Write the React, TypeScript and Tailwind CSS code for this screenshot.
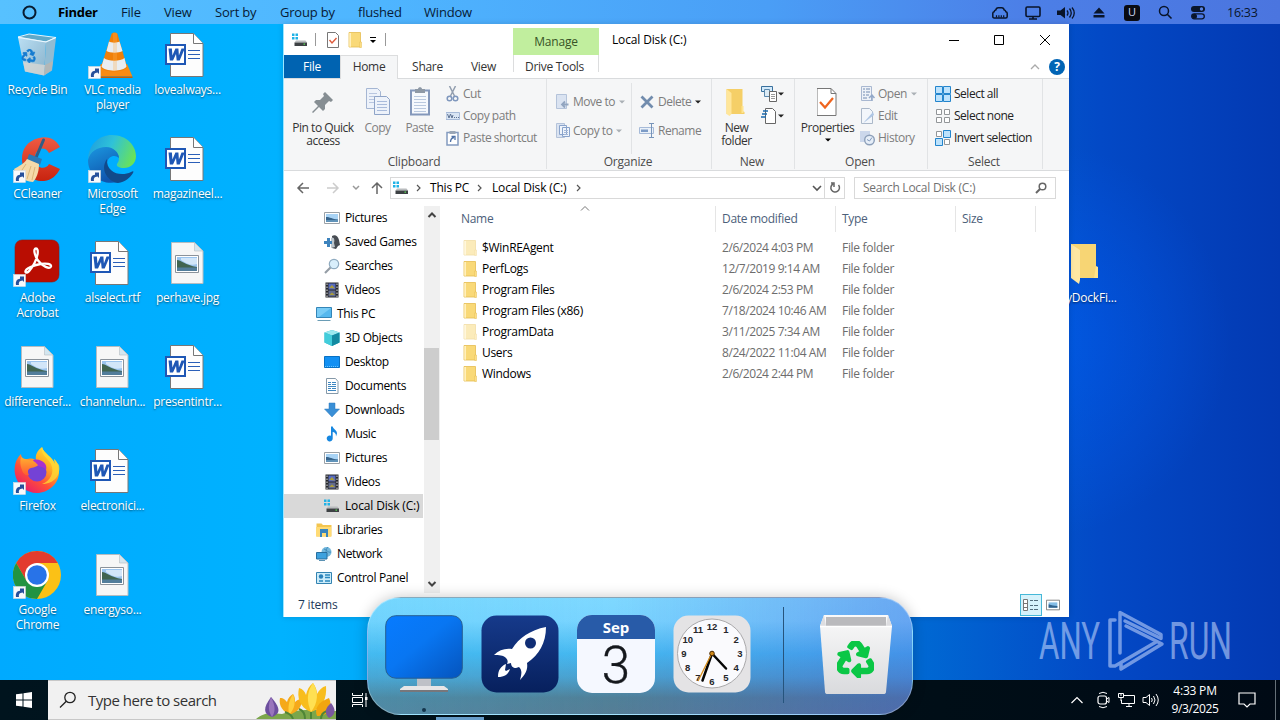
import React from "react";
import clsx from "clsx";
import { FaRecycle } from "react-icons/fa";

type SvgProps = {
	w: number;
	h: number;
	box?: string;
	className?: string;
	children: React.ReactNode;
};

const Svg: React.FC<SvgProps> = ({ w, h, box, className, children }) => (
	<svg
		width={w}
		height={h}
		viewBox={box ?? `0 0 ${w} ${h}`}
		fill="none"
		className={clsx("block shrink-0", className)}
	>
		{children}
	</svg>
);

/* ---------- desktop icons ---------- */

const ShortcutArrow = () => (
	<g>
		<rect x="0.5" y="35.5" width="12" height="12" fill="#f8f9fb" stroke="#d5dbe2" strokeWidth="0.6" />
		<path d="M3 46c-.6-4 1-6 4-6.300V37.500h4v5.500L9.600 41.500C6.500 42 5.500 43 6 46z" fill="#27509b" />
	</g>
);

const RecycleBinIcon = () => (
	<Svg w={48} h={48}>
		<defs>
			<linearGradient id="bin" x1="0" y1="0" x2="1" y2="1">
				<stop stopColor="#c5e2f3" />
				<stop offset="1" stopColor="#8fb2c8" />
			</linearGradient>
		</defs>
		<path d="M5 6 16 3l27 3.500-10 4.500z" fill="#5fa9c9" stroke="#e3f3fb" />
		<path d="M5 6.500 33 11l-2 33.500-19-4z" fill="url(#bin)" opacity=".95" />
		<path d="m33 11 10-4-4 32.500-8 5z" fill="#92bcd3" />
		<path d="m10 31 22 3-1 10.500-19-4z" fill="#dcd8d3" opacity=".75" />
		<path d="m32 34 8-4-1.500 9.500-7.500 5z" fill="#bab5b0" opacity=".8" />
		<g transform="translate(10 17) rotate(8)">
			<FaRecycle size={14} color="#147bd1" stroke="#147bd1" strokeWidth={25} />
		</g>
		<path d="M5 6.500 33 11l10-4.500" stroke="#edf8ff" strokeWidth="1.200" />
	</Svg>
);

const VlcIcon = () => (
	<Svg w={48} h={48}>
		<path d="M13 33h26l5.500 12.500H7z" fill="#f98b12" />
		<path d="M7 45.500h37.500V47H7z" fill="#c85e00" />
		<path d="M13 36c2 6 24 6 26 0l-9.500-33c-.8-2-5.200-2-6 0z" fill="#f08009" />
		<path d="m21 10.500-2.500 9.500c3.500 2.200 12.500 2.200 16 0L31.500 10.500c-2 1.500-8.500 1.500-10.500 0zM16 27l-2.500 8.500c3 5.500 22 5.500 25 0L36.500 27c-4 3.500-16.500 3.500-20.500 0z" fill="#e9edf1" />
		<path d="M27 2v38" stroke="#ffb050" strokeWidth="4" opacity=".3" />
		<ShortcutArrow />
	</Svg>
);

const WordIcon = () => (
	<Svg w={48} h={48} box="1 -1 48 48">
		<path d="M8.500 1.500h23l9.500 10v33H8.500z" fill="#fdfdfd" stroke="#777" />
		<path d="M31.500 1.500v10H41" fill="#fff" stroke="#777" />
		<path d="M26 18.500h12M26 22.500h12M26 26.500h12" stroke="#2b5fb8" />
		<path d="M4 13h19v19H4z" fill="#fff" stroke="#1f57b5" strokeWidth="2" />
		<path d="m6.500 16.500 1.300 12h3.200l3-6.500.7 6.500h3l5-12h-3.200l-2.600 7-.5-7h-3l-3 7-.5-7z" fill="#1f57b5" />
	</Svg>
);

const ImageFileIcon = () => (
	<Svg w={48} h={48} box="1 -1 48 48">
		<path d="M9.500 2.500h23l8.500 8.500v32.500H9.500z" fill="#f6f6f6" stroke="#b5bcc1" />
		<path d="M32.500 2.500V11H41z" fill="#d4e6ef" stroke="#b5bcc1" strokeWidth=".6" />
		<path d="M13.500 15.500h23v17h-23z" fill="#fff" stroke="#8b929a" />
		<path d="M15 17h20v14H15z" fill="#9bc4ee" />
		<path d="M19 18h16v6c-6 2-10 0-16-4z" fill="#d2e6f9" />
		<path d="M15 20c4 0 8 5 20 7v1H15z" fill="#416450" />
		<path d="M15 27.500h20V31H15z" fill="#527d9b" />
	</Svg>
);

const CCleanerIcon = () => (
	<Svg w={48} h={48}>
		<defs>
			<linearGradient id="cc" x1="0" y1="0" x2="0" y2="1">
				<stop stopColor="#ef5b43" />
				<stop offset="1" stopColor="#c8230f" />
			</linearGradient>
		</defs>
		<path d="M47 12C42 3 34 1 26 3 14 6 9 14 9 24c0 14 11 23 22 22 8-1 12-5 16-12l-11-5c-3 6-13 5-14-4-1-12 10-15 14-7z" fill="url(#cc)" />
		<path d="M30.500 5 22 25" stroke="#315d86" strokeWidth="3" strokeLinecap="round" />
		<path d="m16 19 13 5-2 6-13-5z" fill="#2d79b5" />
		<path d="M14 24c-3 5-8 7-13 10 2 6 9 12 19 13 3-3 6-9 6-18z" fill="#f5d9a9" />
		<path d="m13 29-6 9m11-7-4 13m8-12-3 13" stroke="#d6ab69" strokeWidth=".8" />
		<ShortcutArrow />
	</Svg>
);

const EdgeIcon = () => (
	<Svg w={48} h={48}>
		<defs>
			<linearGradient id="edgeTop" x1="0" y1="0.300" x2="1" y2="0.600">
				<stop stopColor="#1fa0de" />
				<stop offset=".45" stopColor="#2fc2d8" />
				<stop offset="1" stopColor="#6be355" />
			</linearGradient>
			<linearGradient id="edgeLeft" x1="0" y1="0" x2="0.400" y2="1">
				<stop stopColor="#1b97e0" />
				<stop offset="1" stopColor="#0f56ae" />
			</linearGradient>
		</defs>
		<path d="M0 24C1 9 11 0 24 0c15 0 24 11 24 21 0 8-6 12-12 12-5 0-8-2-7-4 5-6 0-15-9-16C10 13 3 18 0 24z" fill="url(#edgeTop)" />
		<path d="M0 25c2-8 9-13 18-13 8 0 13 6 13 11-4-4-11-2-12 5-1 9 6 14 11 19C13 51 0 40 0 25z" fill="url(#edgeLeft)" />
		<path d="M19 24c-8 11 2 23 11 24 7-1 12-5 15-10 1-2 0-2-2-1-10 5-25 1-24-13z" fill="#114a8b" />
		<ShortcutArrow />
	</Svg>
);

const AcrobatIcon = () => (
	<Svg w={48} h={48}>
		<rect x="2" y="1" width="44" height="42" rx="7" fill="#b90d02" stroke="#8e1a14" strokeWidth=".6" />
		<path
			d="M23 9.500c3 0 2 8-1.500 14.500C18 31 13.500 35.500 12.500 33c-1-3 8-7 15-8 6-1 11 0 10.500 2.500C37 31 29 27 25 21.500 21.500 16.500 20 9.500 23 9.500z"
			stroke="#fff"
			strokeWidth="2.300"
		/>
		<ShortcutArrow />
	</Svg>
);

const FirefoxIcon = () => (
	<Svg w={48} h={48}>
		<defs>
			<linearGradient id="fox" x1="0.900" y1="0" x2="0.200" y2="1">
				<stop stopColor="#fff040" />
				<stop offset=".35" stopColor="#ffae25" />
				<stop offset=".65" stopColor="#ff5037" />
				<stop offset="1" stopColor="#e51672" />
			</linearGradient>
			<linearGradient id="foxHead" x1="0" y1="0" x2="0" y2="1">
				<stop stopColor="#ffb030" />
				<stop offset="1" stopColor="#ff5b30" />
			</linearGradient>
		</defs>
		<path d="M29 0c-5 4-7 8-6 13-6-3-9-1-11 0C9 11 8 9 8 7 2 13 1 20 2 27c2 11 11 19 22 19s22-9 22-21c0-6-2-11-5-13l1 5C39 9 31 7 29 0z" fill="url(#fox)" />
		<circle cx="24" cy="25" r="9.500" fill="#7442d6" />
		<path d="M20 13c8-2 15 4 13 10-2-3-6-4-10-4z" fill="#a931cf" />
		<path d="M8 10c4 3 8 2 14 5l3 3c-2 3-7 2-9 4s-1 4 0 6c-3 1-6-1-7-5-2-4-2-9-1-13z" fill="url(#foxHead)" />
		<path d="M29 0c-2 8 6 11 9 17 4 9-1 17-9 20 13 0 19-10 17-19l-5-6 1 5C39 9 31 7 29 0z" fill="#ffdc35" opacity=".75" />
		<ShortcutArrow />
	</Svg>
);

const ChromeIcon = () => (
	<Svg w={48} h={48}>
		<circle cx="24" cy="24" r="24" fill="#fbc116" />
		<path d="M24 0a24 24 0 0 1 20.800 12H24L13.600 30 3.200 12A24 24 0 0 1 24 0z" fill="#e33b2e" />
		<path d="M3.200 12A24 24 0 0 0 24 48l10.400-18L24 36 13.600 30z" fill="#229342" />
		<circle cx="24" cy="24" r="12" fill="#fff" />
		<circle cx="24" cy="24" r="9.800" fill="#2873e8" />
		<ShortcutArrow />
	</Svg>
);

const desktopColumns = [
	[
		{ label: "Recycle Bin", icon: <RecycleBinIcon /> },
		{ label: "CCleaner", icon: <CCleanerIcon /> },
		{ label: "Adobe Acrobat", icon: <AcrobatIcon /> },
		{ label: "differencef...", icon: <ImageFileIcon /> },
		{ label: "Firefox", icon: <FirefoxIcon /> },
		{ label: "Google Chrome", icon: <ChromeIcon /> },
	],
	[
		{ label: "VLC media player", icon: <VlcIcon /> },
		{ label: "Microsoft Edge", icon: <EdgeIcon /> },
		{ label: "alselect.rtf", icon: <WordIcon /> },
		{ label: "channelun...", icon: <ImageFileIcon /> },
		{ label: "electronici...", icon: <WordIcon /> },
		{ label: "energyso...", icon: <ImageFileIcon /> },
	],
	[
		{ label: "lovealways...", icon: <WordIcon /> },
		{ label: "magazineel...", icon: <WordIcon /> },
		{ label: "perhave.jpg", icon: <ImageFileIcon /> },
		{ label: "presentintr...", icon: <WordIcon /> },
	],
];

const Desktop: React.FC = () => (
	<div className="flex h-[656px] pt-[7px]">
		{desktopColumns.map((column, i) => (
			<div key={i} className="flex w-[75px] flex-col">
				{column.map((item) => (
					<div key={item.label} className="flex h-[104px] flex-col items-center">
						<div className="mr-px">{item.icon}</div>
						<div className="mt-[3px] px-1.5 text-center leading-[15px] tracking-[-0.25px] text-white [text-shadow:0_1px_2px_rgba(0,0,0,0.55)]">
							{item.label}
						</div>
					</div>
				))}
			</div>
		))}
	</div>
);

/* ---------- top menu bar ---------- */

const menuItems = [
	{ label: "File", width: "w-[43px]" },
	{ label: "View", width: "w-[51px]" },
	{ label: "Sort by", width: "w-[65px]" },
	{ label: "Group by", width: "w-[78px]" },
	{ label: "flushed", width: "w-[66px]" },
	{ label: "Window", width: "w-[60px]" },
];

const MenuBar: React.FC = () => (
	<div className="flex h-6 items-center bg-[linear-gradient(90deg,#57c1ff_0%,#4eb5ff_30%,#4a9ef6_60%,#4c7fe7_80%,#4b75df_100%)] pt-px text-[13px] text-[#071b36]">
		<Svg w={16} h={16} className="ml-[21px] mr-[21px]">
			<circle cx="8.500" cy="7.500" r="6" stroke="#081b30" strokeWidth="2" />
		</Svg>
		<div className="w-[63px] font-bold tracking-[-0.3px] text-black">Finder</div>
		{menuItems.map((item) => (
			<div key={item.label} className={clsx(item.width, "whitespace-nowrap")}>
				{item.label}
			</div>
		))}
		<div className="ml-auto flex items-center text-[#09152b]">
			<Svg w={18} h={16} className="mr-[15px]">
				<path d="M3.200 13c-.9 0-1.400-.6-1.400-1.500V8.300c0-.9.500-1.400 1.400-1.600.2-1 .7-1.500 1.600-1.700.3-1.600 1-2.300 2.400-2.300h3.600c1.400 0 2.100.7 2.400 2.300.9.200 1.400.7 1.600 1.700.9.200 1.400.7 1.400 1.600v3.200c0 .9-.5 1.500-1.400 1.500z" stroke="currentColor" strokeWidth="1.500" />
				<path d="M5.500 12.500v-2.300m2.400 2.300v-2.300m2.400 2.300v-2.300m2.400 2.300v-2.300" stroke="currentColor" strokeWidth="1.200" />
			</Svg>
			<Svg w={18} h={16} className="mr-[14px]">
				<rect x="2" y="2" width="14" height="9.500" rx="1.200" stroke="currentColor" strokeWidth="1.600" />
				<path d="M9 11v3m-4 0h8" stroke="currentColor" strokeWidth="1.600" />
			</Svg>
			<Svg w={20} h={16} className="mr-[16px]">
				<path d="M1 5.500h3.500L9 2v11.500L4.500 10H1z" fill="currentColor" />
				<path d="M11 5.500q2 2.500 0 5m2.500-7q3.500 4.500 0 9m2.500-10q4.500 5.500 0 11" stroke="currentColor" strokeWidth="1.300" />
			</Svg>
			<Svg w={14} h={14} className="mr-[18px]">
				<path d="m7 1.500 5.500 6h-11zM1.500 9h11v2.500h-11z" fill="currentColor" />
			</Svg>
			<div className="mr-[17px] flex size-4 items-center justify-center rounded-[3px] bg-[#090b12] text-[11px] text-[#d2dcf5]">U</div>
			<Svg w={16} h={16} className="mr-[17px]">
				<circle cx="7" cy="6" r="4.500" stroke="currentColor" strokeWidth="1.500" />
				<path d="m10 9 4.500 4.500" stroke="currentColor" strokeWidth="1.600" />
			</Svg>
			<Svg w={16} h={16} className="mr-[21px]">
				<rect x="1" y="1" width="14" height="6" rx="3" fill="currentColor" />
				<circle cx="11.500" cy="4" r="1.700" fill="#5a83e3" />
				<rect x="1.700" y="8.800" width="12.600" height="5" rx="2.500" stroke="currentColor" strokeWidth="1.300" />
				<circle cx="4.500" cy="11.300" r="2.500" fill="currentColor" />
			</Svg>
			<div className="w-[53px] pt-px text-[12.5px] tracking-[-0.25px]">16:33</div>
		</div>
	</div>
);

/* ---------- explorer: small icons ---------- */

const DriveIcon = () => (
	<Svg w={16} h={16}>
		<path d="M0 1.500h2.500V4H0zm3.500 0H6V4H3.500zM0 5h2.500v2.500H0zm3.500 0H6v2.500H3.500z" fill="#20b2e6" />
		<path d="M4 8.500h9.500l1.500 2H2.500z" fill="#b9bcbe" />
		<path d="M2.500 10.500H15V14H2.500z" fill="#3d4144" />
		<path d="M11.500 12.200H13" stroke="#58db55" strokeWidth="1.200" />
	</Svg>
);

const Caret: React.FC<{ className?: string }> = ({ className }) => (
	<Svg w={6} h={4} className={className}>
		<path d="M0 .5h6l-3 3z" fill="currentColor" />
	</Svg>
);

const FolderIcon: React.FC<{ faded?: boolean }> = ({ faded }) => (
	<Svg w={16} h={16} className={faded ? "opacity-50" : ""}>
		<path d="M2 .5h11.500V15H2z" fill="#f9d978" stroke="#e5bd50" strokeWidth=".8" />
		<path d="M2.300 1h1.700v13.800H2.300z" fill="#fff0bd" />
		<path d="M12.700 10H14.500v5.500h-1.800z" fill="#ffe28a" stroke="#e5bd50" strokeWidth=".5" />
	</Svg>
);

const PictureIcon = () => (
	<Svg w={16} h={16}>
		<path d="M.5 2.500h15v11H.5z" fill="#fff" stroke="#9aa1a7" />
		<path d="M2 4h12v8H2z" fill="#a8d3f5" />
		<path d="M2 7c4 0 6 2 12 2.500V12H2z" fill="#36648c" />
		<path d="M2 10h12v2H2z" fill="#6093b9" />
	</Svg>
);

const VideoIcon = () => (
	<Svg w={16} h={16}>
		<path d="M1.500.5h13v15h-13z" fill="#27282c" />
		<path d="M4.500 1.500h7v6h-7z" fill="#576bc0" />
		<path d="M4.500 8.500h7v6h-7z" fill="#626c90" />
		<path d="m5 6 3-3 3 3.500zM5 13l3-2.500 3 2.500z" fill="#a99c3c" />
		<path d="M3 1.500v14m10-14v14" stroke="#e2e3e6" strokeDasharray="1.500 1.500" />
	</Svg>
);

const GamesIcon = () => (
	<Svg w={16} h={16}>
		<path d="M8 2c3-2 6 0 7 4l1 5-2 1-2 3-4-1z" fill="#474c52" />
		<path d="M7 4c3-2 4 2 3 5l1 4-4 1z" fill="#bec6cc" />
		<path d="M0 7h3V4h3v3h2v3H6v3H3v-3H0z" fill="#3d83bd" />
	</Svg>
);

const SearchFolderIcon = () => (
	<Svg w={16} h={16}>
		<path d="m1 15 6-6" stroke="#949da5" strokeWidth="2.200" />
		<circle cx="10" cy="6" r="4.700" fill="#d8eefb" stroke="#8fabc0" strokeWidth="1.200" />
	</Svg>
);

const PcIcon = () => (
	<Svg w={16} h={16}>
		<path d="M.5 1.500h15v10H.5z" fill="#56b8ee" stroke="#3485b7" />
		<path d="M1 2h14L3 11H1z" fill="#91d8fb" opacity=".6" />
		<path d="M1.500 14.500h13" stroke="#6a9cb5" />
	</Svg>
);

const CubeIcon = () => (
	<Svg w={16} h={16}>
		<path d="m8 0 7.500 2.500v10L8 16 .5 12.500v-10z" fill="#27b2c5" />
		<path d="M.5 2.500 8 0l7.500 2.500L8 5.500z" fill="#9be9ef" />
		<path d="M8 5.500 15.500 2.500v10L8 16z" fill="#128aa1" />
		<path d="M.5 2.500 8 5.500V16L.5 12.500z" fill="#42cddb" />
	</Svg>
);

const DesktopIcon = () => (
	<Svg w={16} h={16}>
		<path d="M.5 2.500h15v11H.5z" fill="#1290f3" stroke="#0871c4" />
		<path d="M1 12.500h14" stroke="#67c5ff" strokeDasharray="1 1" />
	</Svg>
);

const DocumentIcon = () => (
	<Svg w={16} h={16}>
		<path d="M2.500.5h9l2.500 3v12H2.500z" fill="#fff" stroke="#8599a9" />
		<path d="M4 4.500h3m1 0h4M4 6.500h3m1 0h4M4 8.500h8M4 10.500h3m1 0h4M4 12.500h8" stroke="#3e87c1" />
	</Svg>
);

const DownloadIcon = () => (
	<Svg w={16} h={16}>
		<path d="M5 1h6v6h4.500L8 15 .5 7H5z" fill="#3a8fd6" stroke="#2d7bbd" strokeWidth=".5" />
	</Svg>
);

const MusicIcon = () => (
	<Svg w={16} h={16}>
		<path d="M7 .5h1.700c.5 3 4.300 3.500 4.300 7l-1 3c.3-3-1.500-4.500-3.300-4.500v6.500a3 3 0 1 1-1.700-2.700z" fill="#1687e0" />
	</Svg>
);

const LibraryIcon = () => (
	<Svg w={16} h={16}>
		<path d="M.5 1.500h5L7 3h8.500v11.500H.5z" fill="#f3c550" />
		<path d="M0 5h15v9.500H0z" fill="#ffdb75" />
		<path d="M4 7h8v8h-2v-4H6v4H4z" fill="#3985bd" />
	</Svg>
);

const NetworkIcon = () => (
	<Svg w={16} h={16}>
		<circle cx="10.500" cy="6" r="5" fill="#74b8dd" />
		<path d="M8 3c3 1 4 4 7 3M9 9c2-3 0-5 3-8" stroke="#3784b5" strokeWidth=".8" />
		<path d="M.5 6.500H11V13H.5z" fill="#3da1de" stroke="#286f9f" />
		<path d="M3 14.500h6" stroke="#5b92b4" />
	</Svg>
);

const ControlPanelIcon = () => (
	<Svg w={16} h={16}>
		<path d="M.5 2.500h15v11H.5z" fill="#ccecfa" stroke="#3383b1" />
		<circle cx="5" cy="6.500" r="2.200" fill="#2b81b9" />
		<path d="M9 5h5M9 7.500h5M3 11h4m2 0h5" stroke="#2a88be" strokeWidth="1.300" />
	</Svg>
);

const navItems = [
	{ label: "Pictures", icon: <PictureIcon />, nested: true },
	{ label: "Saved Games", icon: <GamesIcon />, nested: true },
	{ label: "Searches", icon: <SearchFolderIcon />, nested: true },
	{ label: "Videos", icon: <VideoIcon />, nested: true },
	{ label: "This PC", icon: <PcIcon />, nested: false },
	{ label: "3D Objects", icon: <CubeIcon />, nested: true },
	{ label: "Desktop", icon: <DesktopIcon />, nested: true },
	{ label: "Documents", icon: <DocumentIcon />, nested: true },
	{ label: "Downloads", icon: <DownloadIcon />, nested: true },
	{ label: "Music", icon: <MusicIcon />, nested: true },
	{ label: "Pictures", icon: <PictureIcon />, nested: true },
	{ label: "Videos", icon: <VideoIcon />, nested: true },
	{ label: "Local Disk (C:)", icon: <DriveIcon />, nested: true, selected: true },
	{ label: "Libraries", icon: <LibraryIcon />, nested: false },
	{ label: "Network", icon: <NetworkIcon />, nested: false },
	{ label: "Control Panel", icon: <ControlPanelIcon />, nested: false },
];

const files = [
	{ name: "$WinREAgent", date: "2/6/2024 4:03 PM", faded: true },
	{ name: "PerfLogs", date: "12/7/2019 9:14 AM" },
	{ name: "Program Files", date: "2/6/2024 2:53 PM" },
	{ name: "Program Files (x86)", date: "7/18/2024 10:46 AM" },
	{ name: "ProgramData", date: "3/11/2025 7:34 AM", faded: true },
	{ name: "Users", date: "8/24/2022 11:04 AM" },
	{ name: "Windows", date: "2/6/2024 2:44 PM" },
];

/* ---------- explorer: ribbon ---------- */

const RibbonGroup: React.FC<{ label: string; width: string; children: React.ReactNode }> = ({
	label,
	width,
	children,
}) => (
	<div className={clsx("flex h-[90px] flex-col border-r border-[#e1e3e5]", width)}>
		<div className="flex h-[75px] pt-1">{children}</div>
		<div className="pr-[2px] text-center leading-[15px] tracking-[-0.2px] text-[#4c4c4c]">{label}</div>
	</div>
);

const BigButton: React.FC<{
	icon: React.ReactNode;
	lines: string[];
	width: string;
	muted?: boolean;
	caret?: boolean;
}> = ({ icon, lines, width, muted, caret }) => (
	<div className={clsx("flex shrink-0 flex-col items-center", width, muted ? "text-[#808080]" : "text-[#333]")}>
		<div className="flex h-[38px] items-center">{icon}</div>
		{lines.map((line) => (
			<div key={line} className="whitespace-nowrap leading-[13px]">
				{line}
			</div>
		))}
		{caret && <Caret className="mt-1 text-black" />}
	</div>
);

const SmallButton: React.FC<{
	icon: React.ReactNode;
	label?: string;
	height?: string;
	muted?: boolean;
	caret?: "light" | "dark";
}> = ({ icon, label, height = "h-[22px]", muted, caret }) => (
	<div className={clsx("flex items-center whitespace-nowrap", height, muted ? "text-[#7d7d7d]" : "text-[#222]")}>
		{icon}
		{label && <span className="ml-[3px]">{label}</span>}
		{caret && (
			<Caret className={clsx(label ? "ml-1" : "ml-0", caret === "dark" ? "text-[#222]" : "text-[#aab0b5]")} />
		)}
	</div>
);

const Ribbon: React.FC = () => (
	<div className="flex h-[93px] border-y border-[#d9dbdd] bg-[#f5f6f7] tracking-[-0.48px]">
		<RibbonGroup label="Clipboard" width="w-[263px]">
			<BigButton
				width="w-[78px]"
				lines={["Pin to Quick", "access"]}
				icon={
					<Svg w={24} h={24}>
						<path d="m14 2 8 8-2 2-2-1-4 4v4l-2 2-4-4-6 6-1-1 6-6-4-4 2-2h4l4-4-1-2z" fill="#868e93" />
					</Svg>
				}
			/>
			<BigButton
				width="w-[31px]"
				lines={["Copy"]}
				muted
				icon={
					<Svg w={26} h={32}>
						<path d="M1.500 2.500h11l3 3v17h-14z" fill="#edf2fa" stroke="#a5b6d3" />
						<path d="M4 7.500h8M4 10.500h8M4 13.500h8M4 16.500h8" stroke="#b8c6e0" />
						<path d="M9.500 10.500h12l3 3v15h-15z" fill="#edf2fa" stroke="#8fa4c8" />
						<path d="M12 15.500h10M12 18.500h10M12 21.500h10M12 24.500h10" stroke="#a9bbdb" />
					</Svg>
				}
			/>
			<BigButton
				width="w-[53px]"
				lines={["Paste"]}
				muted
				icon={
					<Svg w={22} h={32}>
						<path d="M2 4.500h18v24H2z" fill="#f6f9fd" stroke="#8498bb" strokeWidth="2" />
						<path d="M5 10.500h12M5 13.500h12M5 16.500h12M5 19.500h12M5 22.500h12M5 25.500h12" stroke="#bac9df" />
						<path d="M6 3h3c0-2.500 4-2.500 4 0h3v4H6z" fill="#8e99a6" />
					</Svg>
				}
			/>
			<div className="flex flex-col">
				<SmallButton
					muted
					label="Cut"
					icon={
						<Svg w={14} h={16}>
							<path d="m3.500 0 5 10M9.500 0l-5 10" stroke="#929eaf" strokeWidth="1.500" />
							<circle cx="3.500" cy="12.500" r="2.300" stroke="#7f97bd" strokeWidth="1.500" />
							<circle cx="9.500" cy="12.500" r="2.300" stroke="#7f97bd" strokeWidth="1.500" />
						</Svg>
					}
				/>
				<SmallButton
					muted
					label="Copy path"
					icon={
						<Svg w={14} h={16}>
							<path d="M0 4.500h13.500v7H0z" fill="#d9e5f4" stroke="#a7bad8" />
							<path d="m1.500 6 1.500 4 1.500-4L6 10l1-3M8 9.500h1m1 0h1m1 0h1" stroke="#5d7293" />
						</Svg>
					}
				/>
				<SmallButton
					muted
					label="Paste shortcut"
					icon={
						<Svg w={14} h={16}>
							<path d="M1 2.500h11v12.500H1z" fill="#fff" stroke="#839bc0" strokeWidth="1.500" />
							<path d="M3.500 1h6v3h-6z" fill="#9aa6b6" />
							<path d="M4.500 12c0-2.500 1-4 3.500-4.500M5.500 6.500H9V10" stroke="#5274a8" strokeWidth="1.300" />
						</Svg>
					}
				/>
			</div>
		</RibbonGroup>

		<RibbonGroup label="Organize" width="w-[165px]">
			<div className="flex w-[85px] flex-col border-r border-[#e1e3e5] pl-[9px] pt-1">
				<SmallButton
					height="h-[29px]"
					muted
					label="Move to"
					caret="light"
					icon={
						<Svg w={14} h={16}>
							<path d="M.5.5h10v14H.5z" fill="#dae3f1" stroke="#b4c3da" />
							<path d="M12.500 10.500H6m3-3-3 3 3 3" stroke="#92a5c0" strokeWidth="1.800" />
						</Svg>
					}
				/>
				<SmallButton
					height="h-[29px]"
					muted
					label="Copy to"
					caret="light"
					icon={
						<Svg w={14} h={16}>
							<path d="M.5.5h8v14h-8z" fill="#dae3f1" stroke="#b4c3da" />
							<path d="M3.500 2.500h7v9h-7zM6.500 4.500h7v9h-7z" fill="#eff4fb" stroke="#89a3cb" />
							<path d="M8 7.500h4M8 9.500h4M8 11.500h4" stroke="#a3b7d7" />
						</Svg>
					}
				/>
			</div>
			<div className="flex flex-col pl-[7px] pt-1">
				<SmallButton
					height="h-[29px]"
					muted
					label="Delete"
					caret="dark"
					icon={
						<Svg w={16} h={16}>
							<path d="m2.500 2.500 11 11m0-11-11 11" stroke="#718cad" strokeWidth="2.800" />
						</Svg>
					}
				/>
				<SmallButton
					height="h-[29px]"
					muted
					label="Rename"
					icon={
						<Svg w={16} h={16}>
							<path d="M.5 4.500h14v6H.5z" fill="#eaf1f9" stroke="#a6bad8" />
							<path d="M2 6.500h7v2.500H2z" fill="#7c9bc6" />
							<path d="M12.500 1v13M10 .5h5M10 14.500h5" stroke="#7794b9" />
						</Svg>
					}
				/>
			</div>
		</RibbonGroup>

		<RibbonGroup label="New" width="w-[83px]">
			<BigButton
				width="w-[49px]"
				lines={["New", "folder"]}
				icon={
					<Svg w={22} h={30} box="2.5 0 22 30">
						<path d="M3 2h16v22l2 1v2H3z" fill="#f5cf67" />
						<path d="m3 2 5 4v21l-2 2-3-2z" fill="#ffe69a" />
						<path d="M18 19h2v7h-2z" fill="#ffe58f" />
					</Svg>
				}
			/>
			<div className="flex flex-col">
				<SmallButton
					caret="dark"
					icon={
						<Svg w={17} h={16}>
							<path d="M.5.5h11v5H.5z" fill="#d3eafb" stroke="#39709d" />
							<path d="M3.500 3.500h5v7h-5z" fill="#dcebf5" stroke="#5a88ad" />
							<path d="M8.500 5.500h7v10h-7z" fill="#fff" stroke="#666" />
							<path d="M10 8.500h4M10 10.500h4M10 12.500h4" stroke="#999" />
						</Svg>
					}
				/>
				<SmallButton
					caret="dark"
					icon={
						<Svg w={17} h={16}>
							<path d="M4.500.5h7l3 3v12h-10z" fill="#fff" stroke="#666" />
							<path d="M2 3h5M1 6h5M0 9h5" stroke="#1d6baf" strokeWidth="1.500" />
						</Svg>
					}
				/>
			</div>
		</RibbonGroup>

		<RibbonGroup label="Open" width="w-[133px]">
			<BigButton
				width="w-[65px]"
				lines={["Properties"]}
				caret
				icon={
					<Svg w={22} h={30} box="1.5 0 22 30">
						<path d="M1.500 1.500h14l5 5v22h-19z" fill="#fff" stroke="#777" />
						<path d="M15.500 1.500v5h5" stroke="#777" />
						<path d="m4.500 15 5 5.500 8-9.500" stroke="#ef641e" strokeWidth="2.200" />
					</Svg>
				}
			/>
			<div className="flex flex-col">
				<SmallButton
					muted
					label="Open"
					caret="light"
					icon={
						<Svg w={15} h={16}>
							<path d="M1.500.5h10v14h-10z" fill="#eef2f8" stroke="#a9b8d1" />
							<path d="M3 3h2m1 0h4M3 6h2m1 0h4M3 9h2m1 0h3M3 12h4" stroke="#9caec9" strokeWidth="1.500" />
							<path d="M12 15V9m-3 3 3-3 2.500 3" stroke="#92a8c8" strokeWidth="1.500" />
						</Svg>
					}
				/>
				<SmallButton
					muted
					label="Edit"
					icon={
						<Svg w={15} h={16}>
							<path d="M1.500.5h8l3 3v12h-11z" fill="#f2f6fb" stroke="#abb8c9" />
							<path d="m13 4-8 9-1.500 2L14 7z" fill="#afc6e4" />
						</Svg>
					}
				/>
				<SmallButton
					muted
					label="History"
					icon={
						<Svg w={15} h={16}>
							<path d="M0 1h10v11H0z" fill="#cbd7eb" />
							<circle cx="9.500" cy="10" r="4.800" fill="#e6eef8" stroke="#8c9fb9" strokeWidth="1.400" />
							<path d="m7 9.500 2.500 1.500 2.500-3.500" stroke="#7f98bb" />
						</Svg>
					}
				/>
			</div>
		</RibbonGroup>

		<RibbonGroup label="Select" width="w-[115px]">
			<div className="flex flex-col pl-[7px]">
				<SmallButton
					label="Select all"
					icon={
						<Svg w={16} h={16}>
							<path d="M.5.5h7v7h-7zM8.500.5h7v7h-7zM.5 8.500h7v7h-7zM8.500 8.500h7v7h-7z" fill="#bce2fc" stroke="#2385cd" />
						</Svg>
					}
				/>
				<SmallButton
					label="Select none"
					icon={
						<Svg w={16} h={16}>
							<path d="M1.500 1.500h5v5h-5zM9.500 1.500h5v5h-5zM1.500 9.500h5v5h-5zM9.500 9.500h5v5h-5z" fill="#fff" stroke="#929699" />
						</Svg>
					}
				/>
				<SmallButton
					label="Invert selection"
					icon={
						<Svg w={16} h={16}>
							<path d="M1.500 1.500h5v5h-5zM9.500 9.500h5v5h-5z" fill="#fff" stroke="#929699" />
							<path d="M8.500.5h7v7h-7zM.5 8.500h7v7h-7z" fill="#bce2fc" stroke="#2385cd" />
						</Svg>
					}
				/>
			</div>
		</RibbonGroup>
	</div>
);

/* ---------- explorer window ---------- */

const TitleBar: React.FC = () => (
	<div className="flex h-[31px]">
		<div className="flex w-[229px] items-center pl-2">
			<DriveIcon />
			<div className="ml-[7px] h-[13px] w-px bg-[#999]" />
			<Svg w={16} h={16} className="ml-[9px]">
				<path d="M2.500.5h8l3 3v12h-11z" fill="#fff" stroke="#777" />
				<path d="m4.500 8 2.500 3L11.500 6" stroke="#de5b3c" strokeWidth="1.400" />
			</Svg>
			<div className="ml-[6px]">
				<FolderIcon />
			</div>
			<Svg w={8} h={8} className="ml-[6px] text-black">
				<path d="M1 1.500h6" stroke="currentColor" />
				<path d="M1 4h6L4 7z" fill="currentColor" />
			</Svg>
			<div className="ml-2 h-[13px] w-px bg-[#999]" />
		</div>
		<div className="mt-1 flex w-[86px] items-center justify-center bg-[#c1ee9e] pt-px text-[#385327]">Manage</div>
		<div className="ml-[13px] flex items-center tracking-[-0.15px] text-black">Local Disk (C:)</div>
		<div className="ml-auto flex items-center pr-[18px]">
			<Svg w={12} h={12} className="mr-[33px]">
				<path d="M1 6.500h10" stroke="#000" />
			</Svg>
			<Svg w={12} h={12} className="mr-[34px]">
				<path d="M1.500 1.500h9v9h-9z" stroke="#000" />
			</Svg>
			<Svg w={12} h={12}>
				<path d="m1 1 10 10m0-10L1 11" stroke="#000" />
			</Svg>
		</div>
	</div>
);

const TabRow: React.FC = () => (
	<div className="flex h-[23px] tracking-[-0.3px] text-[#333]">
		<div className="flex w-14 items-center justify-center bg-[#0063b1] text-white">File</div>
		<div className="-mb-px flex w-[58px] items-center justify-center border-x border-t border-[#dcddde] bg-[#f5f6f7] pb-px">
			Home
		</div>
		<div className="flex w-[59px] items-center justify-center">Share</div>
		<div className="flex w-[53px] items-center justify-center">View</div>
		<div className="ml-[3px] flex h-[17px] w-[86px] justify-center self-start whitespace-nowrap border-x border-[#dcddde] pr-[3px] pt-[3px]">
			Drive Tools
		</div>
		<div className="ml-auto flex items-center pr-1">
			<Svg w={10} h={8} className="mr-[9px]">
				<path d="m1 6 4-4 4 4" stroke="#aaa" strokeWidth="1.300" />
			</Svg>
			<div className="flex size-4 items-center justify-center rounded-full bg-[#0064b5] font-bold text-white">?</div>
		</div>
	</div>
);

const Crumb = () => (
	<Svg w={6} h={8}>
		<path d="m1 1 3 3-3 3" stroke="#555" strokeWidth="1.200" />
	</Svg>
);

const AddressRow: React.FC = () => (
	<div className="flex h-[34px] items-center pl-3">
		<Svg w={14} h={14} className="mr-[16px]">
			<path d="M13 7H2m5-5L2 7l5 5" stroke="#666" strokeWidth="1.500" />
		</Svg>
		<Svg w={14} h={14} className="mr-[12px]">
			<path d="M1 7h11M7 2l5 5-5 5" stroke="#ccc" strokeWidth="1.500" />
		</Svg>
		<Svg w={8} h={6} className="mr-[10px]">
			<path d="m1 1 3 3 3-3" stroke="#999" strokeWidth="1.500" />
		</Svg>
		<Svg w={14} h={14} className="mr-[6px]">
			<path d="M7 13V2M2 7l5-5 5 5" stroke="#666" strokeWidth="1.500" />
		</Svg>
		<div className="flex h-[22px] w-[455px] items-center border border-[#d9d9d9] pl-[2px] text-black">
			<DriveIcon />
			<div className="flex w-[21px] pl-[7px]">
				<Crumb />
			</div>
			<div className="w-[47px] whitespace-nowrap">This PC</div>
			<Crumb />
			<div className="ml-[9px] w-[84px] whitespace-nowrap tracking-[-0.15px]">Local Disk (C:)</div>
			<Crumb />
			<Svg w={10} h={8} className="ml-auto mr-[2px]">
				<path d="m1 2 4 4 4-4" stroke="#555" strokeWidth="1.600" />
			</Svg>
			<div className="flex h-full w-[20px] items-center justify-center border-l border-[#d9d9d9]">
				<Svg w={12} h={12}>
					<path d="M9.500 3A4.300 4.300 0 1 1 4 2m-2-1h3v4" stroke="#666" strokeWidth="1.500" />
				</Svg>
			</div>
		</div>
		<div className="ml-[9px] flex h-[22px] w-[202px] items-center justify-between border border-[#d9d9d9] pl-2 pr-2 tracking-[-0.25px] text-[#717171]">
			Search Local Disk (C:)
			<Svg w={12} h={12}>
				<circle cx="7.500" cy="4.500" r="3.300" stroke="#666" strokeWidth="1.500" />
				<path d="m5 7-4 4" stroke="#666" strokeWidth="2" />
			</Svg>
		</div>
	</div>
);

const NavPane: React.FC = () => (
	<div className="flex h-[387px] w-[157px] shrink-0 tracking-[-0.35px] text-black">
		<div className="w-[139px] overflow-hidden">
			{navItems.map((item, i) => (
				<div
					key={i}
					className={clsx(
						"flex h-6 items-center gap-[5px] whitespace-nowrap",
						item.nested ? "pl-10" : "pl-8",
						item.selected && "bg-[#d9d9d9] tracking-[-0.15px]"
					)}
				>
					{item.icon}
					{item.label}
				</div>
			))}
		</div>
		<div className="ml-px flex w-4 flex-col items-center bg-[#f0f0f0]">
			<Svg w={10} h={8} className="mt-[5px]">
				<path d="m1.500 6 3.500-3.500L8.500 6" stroke="#444" strokeWidth="2" />
			</Svg>
			<div className="mt-[129px] h-[92px] w-[15px] self-start bg-[#cdcdcd]" />
			<Svg w={10} h={8} className="mb-[5px] mt-auto">
				<path d="M1.500 2 5 5.500 8.500 2" stroke="#444" strokeWidth="2" />
			</Svg>
		</div>
	</div>
);

const FileList: React.FC = () => (
	<div className="relative flex-1">
		<Svg w={10} h={6} className="absolute left-[139px] top-0">
			<path d="m1 4.500 4-4 4 4" stroke="#777" />
		</Svg>
		<div className="flex h-[26px] items-center tracking-[-0.3px] text-[#4c607a]">
			<div className="flex h-full w-[275px] items-center border-r border-[#e5e5e5] pl-5">Name</div>
			<div className="flex h-full w-[120px] items-center border-r border-[#e5e5e5] pl-[6px]">Date modified</div>
			<div className="flex h-full w-[120px] items-center border-r border-[#e5e5e5] pl-[6px]">Type</div>
			<div className="flex h-full w-[80px] items-center border-r border-[#e5e5e5] pl-[6px]">Size</div>
		</div>
		<div className="mt-[5px]">
			{files.map((file) => (
				<div key={file.name} className="flex h-[21px] items-center whitespace-nowrap tracking-[-0.3px]">
					<div className="flex w-[281px] items-center gap-1 pl-[21px] text-black">
						<FolderIcon faded={file.faded} />
						{file.name}
					</div>
					<div className="w-[120px] tracking-[-0.43px] text-[#6d6d6d]">{file.date}</div>
					<div className="text-[#6d6d6d]">File folder</div>
				</div>
			))}
		</div>
	</div>
);

const Explorer: React.FC = () => (
	<div className="absolute left-[283px] top-6 h-[593px] w-[786px] border-l border-[#9be6ff] bg-white shadow-[0_0_6px_rgba(0,0,0,0.15)]">
		<TitleBar />
		<TabRow />
		<Ribbon />
		<AddressRow />
		<div className="mt-px flex">
			<NavPane />
			<FileList />
		</div>
		<div className="flex h-6 items-center pl-[14px] text-[#1e395b]">
			7 items
			<div className="ml-auto mr-[4px] flex size-[22px] items-center justify-center border border-[#45b8d8] bg-[#d6f2fb]">
				<Svg w={16} h={14}>
					<path d="M.5 1.500h4v11h-4zM.5 5.500h4M.5 9.500h4" fill="#fff" stroke="#777" />
					<path d="M7 2.500h3m1 0h4M7 7.500h3m1 0h4M7 11.500h3m1 0h4" stroke="#526c7b" />
				</Svg>
			</div>
			<div className="mr-[9px]">
				<Svg w={14} h={14} box="0 0 16 16">
					<path d="M.5 2.500h15v11H.5z" fill="#fff" stroke="#777" />
					<path d="M3 5h10v6H3z" fill="#85bde6" />
					<path d="M3 7c4 1 6 2 10 2v2H3z" fill="#31618c" />
				</Svg>
			</div>
		</div>
	</div>
);

/* ---------- dock ---------- */

const clockNumbers = [12, 1, 2, 3, 4, 5, 6, 7, 8, 9, 10, 11];

const DockMonitor = () => (
	<Svg w={78} h={82} className="mr-[18px]">
		<defs>
			<linearGradient id="screen" x1="0" y1="0" x2="1" y2="1">
				<stop stopColor="#077bff" />
				<stop offset=".45" stopColor="#0876f2" />
				<stop offset="1" stopColor="#0554bd" />
			</linearGradient>
		</defs>
		<path d="M32 62h14v12H32z" fill="#bfc1c7" />
		<rect x=".7" y=".7" width="76.600" height="62.500" rx="10" fill="url(#screen)" stroke="#265e91" />
		<path d="M19 71h40l4 3v3H15v-3z" fill="#e8e6e7" />
		<path d="M15 75h48v2H15z" fill="#77777b" />
	</Svg>
);

const DockRocket = () => (
	<Svg w={78} h={82} className="mr-[18px]">
		<defs>
			<linearGradient id="rocketBg" x1="0" y1="0" x2="0" y2="1">
				<stop stopColor="#163a8b" />
				<stop offset="1" stopColor="#07205d" />
			</linearGradient>
		</defs>
		<rect x=".5" y=".5" width="77" height="77" rx="15" fill="url(#rocketBg)" />
		<path d="M65 12c-16 3-27 11-34 22-7-1-13 1-18 6 5 0 9 0 12 3 2 2 2 4 1 6l4-1c0 3 2 5 5 5l3-1c3 3 3 6 1 13 6-6 8-11 7-17 12-8 19-20 19-36z" fill="#fff" />
		<circle cx="49.500" cy="28" r="5.500" fill="#102d74" />
		<path d="M25 49c-5 2-8 6-8 13 6 0 10-2 12-8l-4 2-1-1z" fill="#fff" />
	</Svg>
);

const DockCalendar = () => (
	<div className="mr-[18px] flex h-[78px] w-[78px] flex-col items-center rounded-[15px] bg-[#f5f8ff] tracking-normal">
		<div className="flex h-[24px] w-full items-center justify-center rounded-t-[15px] bg-[#285ba8] text-[15px] font-bold leading-[22px] text-white">
			Sep
		</div>
		<div className="font-['Roboto'] text-[51px] font-light leading-[54px] text-[#15181d] [-webkit-text-stroke:0.4px_#15181d]">
			3
		</div>
	</div>
);

const DockClock = () => (
	<Svg w={78} h={82}>
		<rect x=".5" y=".5" width="77" height="77" rx="15" fill="#e4e3e5" />
		<circle cx="39" cy="38.500" r="34.500" fill="#fafafd" stroke="#aaa9ab" />
		{clockNumbers.map((n, i) => (
			<text
				key={n}
				x={39 + 28 * Math.sin((i * Math.PI) / 6)}
				y={42 - 27.5 * Math.cos((i * Math.PI) / 6)}
				textAnchor="middle"
				fill="#25262a"
				className="font-['Liberation_Sans'] text-[9.5px] font-bold tracking-normal"
			>
				{n}
			</text>
		))}
		<path d="m39 38.500 14 15" stroke="#050505" strokeWidth="2.500" strokeLinecap="round" />
		<path d="m39 38.500-9.500 27" stroke="#050505" strokeWidth="2.500" strokeLinecap="round" />
		<path d="m40 36-15 30" stroke="#d78c15" strokeWidth="1.200" />
		<circle cx="39" cy="38.500" r="2.300" fill="#d18916" stroke="#4c2b04" />
	</Svg>
);

const DockTrash = () => (
	<Svg w={74} h={82}>
		<defs>
			<linearGradient id="trash" x1="0" y1="0" x2="0" y2="1">
				<stop stopColor="#fafafa" />
				<stop offset="1" stopColor="#d9dadd" />
			</linearGradient>
		</defs>
		<path d="M5 0h64l4 11-6 66c-.2 1.500-1 2-2.500 2h-56C7 79 6.200 78.500 6 77L1 11z" fill="url(#trash)" />
		<path d="M7 2h60v9H7z" fill="#bababd" />
		<path d="M5 0 1 11h6zM69 0l4 11h-6z" fill="#dddde0" />
		<path d="M1 11.500h72" stroke="#fff" strokeWidth="1.500" />
		<svg x="18" y="26" width="37" height="37">
			<FaRecycle size={37} color="#0bc746" stroke="#0bc746" strokeWidth={26} />
		</svg>
	</Svg>
);

const Dock: React.FC = () => (
	<div className="absolute left-[367px] top-[597px] flex h-[118px] w-[546px] items-start rounded-[34px] border border-white/30 bg-[linear-gradient(90deg,rgba(60,205,245,0.15),rgba(60,180,255,0)_45%,rgba(65,75,215,0.34)),linear-gradient(180deg,#7ed8ff_0%,#79d4ff_20%,#45b7f0_48%,#4aa1d0_68%,#508098_86%,#557d96_100%)] pl-[17px] pt-[17px] shadow-[0_0_14px_rgba(0,0,0,0.22)]">
		<DockMonitor />
		<DockRocket />
		<DockCalendar />
		<DockClock />
		<div className="-mt-2 ml-8 h-24 w-px bg-[#26547d]" />
		<div className="ml-[35px]">
			<DockTrash />
		</div>
		<div className="absolute left-[54px] top-[110px] size-1 rounded-full bg-[#14354c]" />
	</div>
);

/* ---------- taskbar ---------- */

const Flowers = () => (
	<Svg w={80} h={38}>
		<path d="M0 38c8-7 16-6 26-5 14-5 36-5 54-3v8z" fill="#7ba64b" />
		<path d="M16 36c-9-3-9-9-1-20 7 8 12 16 1 20z" fill="#6c4e9e" />
		<path d="M15 16c-3 8-3 14 1 20 4-6 3-12-1-20z" fill="#9875bc" />
		<path d="M33 34c-9-6-10-12-9-17 4 0 5 2 7 4 1-4 3-6 6-8 2 3 2 5 2 8 2-2 4-3 7-3 0 8-4 13-13 16z" fill="#f5a91a" />
		<path d="M37 13c-5 8-5 14-4 21 6-7 7-13 4-21z" fill="#ffd03d" />
		<path d="M55 31c-12-5-14-15-12-24 4 1 6 4 7 7 1-5 3-9 7-12 3 4 4 8 4 11 2-4 5-7 9-8 1 12-3 22-15 26z" fill="#f8bd1c" />
		<path d="M57 2c-7 10-6 19-2 29 7-9 8-20 2-29z" fill="#ffe052" />
		<path d="M61 35c-3-7 1-14 12-18 4 9 0 18-12 18z" fill="#f2a60f" />
		<path d="M37 38c-1-4-5-6-8-7m26 0v7m-6 0c0-6-3-9-6-10m22 10c0-5 3-7 6-8" stroke="#4e8537" strokeWidth="2" />
		<path d="M73 37c-5-5-4-10 2-15 5 6 5 12-2 15z" fill="#7a579f" />
	</Svg>
);

const Taskbar: React.FC = () => (
	<div className="flex h-10 bg-[linear-gradient(90deg,#00141e,#001018_60%,#000a15)] text-white">
		<div className="flex w-12 items-center justify-center">
			<Svg w={16} h={16}>
				<path d="m0 2.300 6.500-.9v6.100H0zM7.500 1.200 16 0v7.500H7.500zM0 8.500h6.500v6.100L0 13.700zM7.500 8.500H16V16l-8.500-1.200z" fill="#fff" />
			</Svg>
		</div>
		<div className="flex h-full w-[288px] items-center border-y border-[#c8c8c8] bg-[#f1f1f1] pl-[11px] text-[#333]">
			<Svg w={18} h={18}>
				<circle cx="11" cy="6.500" r="5.200" stroke="#222" strokeWidth="1.300" />
				<path d="M7.300 10.300 1 16.500" stroke="#222" strokeWidth="1.300" />
			</Svg>
			<span className="ml-[11px] w-[169px] whitespace-nowrap text-[15px] tracking-[-0.5px]">Type here to search</span>
			<Flowers />
		</div>
		<div className="ml-4 flex items-center">
			<Svg w={18} h={16}>
				<path d="M.5 1v2.500h10V1M.5 15v-2.500h10V15M.5 5.500h10v5H.5zM14 1v14" stroke="#fff" />
				<path d="M13 5h2.500v3H13z" fill="#fff" />
			</Svg>
		</div>
		<div className="ml-[66px] flex w-12 items-end">
			<div className="h-[3px] w-full bg-[#6fa9d9]" />
		</div>
		<div className="ml-auto flex items-center">
			<Svg w={14} h={10} className="mr-[12px]">
				<path d="m1.500 8 5.500-5.500L12.500 8" stroke="#fff" strokeWidth="1.200" />
			</Svg>
			<Svg w={14} h={18} className="mr-[8px]">
				<path d="M3 2.500q4-2.500 8 0M3 15.500q4 2.500 8 0M10.500 8l2.500-1.500v5L10.500 10" stroke="#fff" />
				<rect x="2" y="5" width="8.500" height="8" rx="2" stroke="#fff" strokeWidth="1.200" />
			</Svg>
			<Svg w={18} h={16} className="mr-[6px]">
				<path d="M6 3.500h10.500v8h-13V8M8 14.500h6M11 12v2.500M.5 1.500h5v4h-5zM3 6v3" stroke="#fff" />
				<path d="M2 3h2" stroke="#fff" />
			</Svg>
			<Svg w={20} h={16} className="-mr-px">
				<path d="M1 5.500h3l3.500-3v11l-3.500-3H1z" stroke="#fff" />
				<path d="M9.500 6q1.500 2 0 4m2-6q3 4 0 8m2.500-10q4.500 6 0 12" stroke="#fff" />
			</Svg>
			<div className="flex w-[68px] flex-col items-center leading-[18px]">
				<div>4:33 PM</div>
				<div className="tracking-[-0.35px]">9/3/2025</div>
			</div>
			<Svg w={18} h={18} className="ml-[9px] mr-[19px]">
				<path d="M1 2h16v11h-5l-3 3-3-3H1z" stroke="#fff" strokeWidth="1.200" />
			</Svg>
			<div className="mr-1 h-10 w-px bg-[#657078]" />
		</div>
	</div>
);

const Watermark = () => (
	<Svg w={210} h={66} className="absolute left-[1037px] top-[608px] opacity-55">
		<g fill="#cbdcff" className="font-['Roboto'] text-[52px] font-normal tracking-normal">
			<text x="2" y="51" textLength="61" lengthAdjust="spacingAndGlyphs">
				ANY
			</text>
			<text x="132" y="51" textLength="63" lengthAdjust="spacingAndGlyphs">
				RUN
			</text>
		</g>
		<g stroke="#cbdcff" strokeWidth="3.500" strokeLinejoin="round" strokeLinecap="round">
			<path d="M83 45V4.500l41 22v4L88 13" />
			<path d="M89 18l36 18-41 25v-5" />
			<path d="M78 12h-5v46h5l41-24" />
		</g>
	</Svg>
);

const DockFinderShortcut = () => (
	<div className="absolute left-[1048px] top-[240px] flex w-[76px] flex-col items-center">
		<Svg w={48} h={48} box="14 0 48 48">
			<path d="M23 4h25v34H23z" fill="#f5d06f" />
			<path d="M32 10v28h14l2-2V4H24z" fill="#f7d574" />
			<path d="m23 4 9 6v30l-1 4-8-6z" fill="#ffe7a2" />
			<path d="M48 26l2 1v11h-4z" fill="#ffe388" />
		</Svg>
		<div className="mt-[2px] leading-[15px] text-white [text-shadow:0_1px_2px_rgba(0,0,0,0.55)]">MyDockFi...</div>
	</div>
);

const App: React.FC = () => (
	<div className="relative h-[720px] w-[1280px] overflow-hidden bg-[radial-gradient(circle_at_1030px_340px,rgba(0,100,255,0.5),rgba(0,90,240,0)_200px),linear-gradient(90deg,#00aaff_0%,#00b2ff_22%,#0099f0_45%,#0068d3_72%,#0349c6_86%,#0339b2_100%)] font-['Open_Sans','Noto_Sans',sans-serif] text-[12px] tracking-[-0.2px]">
		<MenuBar />
		<Desktop />
		<Taskbar />
		<DockFinderShortcut />
		<Watermark />
		<Explorer />
		<Dock />
	</div>
);

export default App;
